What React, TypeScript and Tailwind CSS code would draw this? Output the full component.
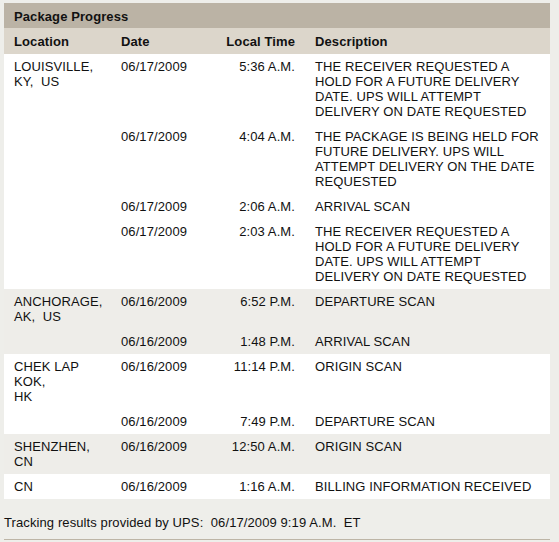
import React from 'react';

type Scan = { date: string; time: string; desc: string[] };
type Stop = { loc: string[]; shaded: boolean; scans: Scan[] };

const stops: Stop[] = [
  {
    loc: ['LOUISVILLE,', 'KY,\u00a0\u00a0US'],
    shaded: false,
    scans: [
      {
        date: '06/17/2009',
        time: '5:36 A.M.',
        desc: ['THE RECEIVER REQUESTED A', 'HOLD FOR A FUTURE DELIVERY', 'DATE. UPS WILL ATTEMPT', 'DELIVERY ON DATE REQUESTED'],
      },
      {
        date: '06/17/2009',
        time: '4:04 A.M.',
        desc: ['THE PACKAGE IS BEING HELD FOR', 'FUTURE DELIVERY. UPS WILL', 'ATTEMPT DELIVERY ON THE DATE', 'REQUESTED'],
      },
      { date: '06/17/2009', time: '2:06 A.M.', desc: ['ARRIVAL SCAN'] },
      {
        date: '06/17/2009',
        time: '2:03 A.M.',
        desc: ['THE RECEIVER REQUESTED A', 'HOLD FOR A FUTURE DELIVERY', 'DATE. UPS WILL ATTEMPT', 'DELIVERY ON DATE REQUESTED'],
      },
    ],
  },
  {
    loc: ['ANCHORAGE,', 'AK,\u00a0\u00a0US'],
    shaded: true,
    scans: [
      { date: '06/16/2009', time: '6:52 P.M.', desc: ['DEPARTURE SCAN'] },
      { date: '06/16/2009', time: '1:48 P.M.', desc: ['ARRIVAL SCAN'] },
    ],
  },
  {
    loc: ['CHEK LAP', 'KOK,', 'HK'],
    shaded: false,
    scans: [
      { date: '06/16/2009', time: '11:14 P.M.', desc: ['ORIGIN SCAN'] },
      { date: '06/16/2009', time: '7:49 P.M.', desc: ['DEPARTURE SCAN'] },
    ],
  },
  {
    loc: ['SHENZHEN,', 'CN'],
    shaded: true,
    scans: [{ date: '06/16/2009', time: '12:50 A.M.', desc: ['ORIGIN SCAN'] }],
  },
  {
    loc: ['CN'],
    shaded: false,
    scans: [{ date: '06/16/2009', time: '1:16 A.M.', desc: ['BILLING INFORMATION RECEIVED'] }],
  },
];

function Lines({ lines }: { lines: string[] }) {
  return (
    <>
      {lines.map((l, i) => (
        <div key={i} className="whitespace-nowrap">
          {l}
        </div>
      ))}
    </>
  );
}

export default function App() {
  return (
    <div
      className="w-[559px] h-[542px] bg-[#eeeeea] pt-[3px] pl-[4px] text-[13px] leading-[15px] tracking-[0.1px] text-[#111]"
      style={{ fontFamily: '"Liberation Sans", Arial, sans-serif' }}
    >
      <table className="w-[546px] table-fixed border-collapse bg-white">
        <colgroup>
          <col className="w-[107px]" />
          <col className="w-[90px]" />
          <col className="w-[104px]" />
          <col className="w-[245px]" />
        </colgroup>
        <thead>
          <tr className="bg-[#bbb3a5] h-[25px]">
            <th colSpan={4} className="text-left font-bold px-[10px] pt-[1px]">
              Package Progress
            </th>
          </tr>
          <tr className="bg-[#dcd6cb] h-[26px] font-bold">
            <th className="text-left px-[10px]">Location</th>
            <th className="text-left px-[10px]">Date</th>
            <th className="text-right px-[10px]">Local Time</th>
            <th className="text-left px-[10px]">Description</th>
          </tr>
        </thead>
        <tbody>
          {stops.map((s, si) =>
            s.scans.map((sc, i) => (
              <tr key={`${si}-${i}`} className={s.shaded ? 'bg-[#eeede9]' : 'bg-white'}>
                <td className="align-top px-[10px] py-[5px]">{i === 0 ? <Lines lines={s.loc} /> : null}</td>
                <td className="align-top px-[10px] py-[5px]">{sc.date}</td>
                <td className="align-top px-[10px] py-[5px] text-right whitespace-nowrap">{sc.time}</td>
                <td className="align-top px-[10px] py-[5px]">
                  <Lines lines={sc.desc} />
                </td>
              </tr>
            ))
          )}
        </tbody>
      </table>
      <div className="mt-[16px] whitespace-pre">Tracking results provided by UPS:  06/17/2009 9:19 A.M.  ET</div>
      <div className="mt-[9px] w-[546px] h-px bg-[#bdb5a6]" />
    </div>
  );
}
